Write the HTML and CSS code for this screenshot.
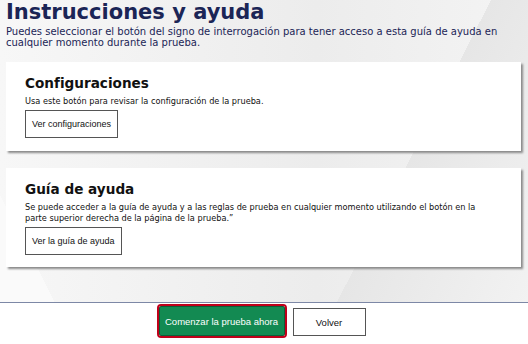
FILE: index.html
```html
<!DOCTYPE html>
<html lang="es">
<head>
	<meta charset="utf-8">
	<link rel="stylesheet" href="styles.css">
</head>
<body>
	<div class="page">
		<div class="content">
			<h1 class="title">Instrucciones y ayuda</h1>
			<p class="intro">Puedes seleccionar el botón del signo de interrogación para tener acceso a esta guía de ayuda en cualquier momento durante la prueba.</p>

			<section class="card card-config">
				<h2>Configuraciones</h2>
				<p>Usa este botón para revisar la configuración de la prueba.</p>
				<button class="btn-outline">Ver configuraciones</button>
			</section>

			<section class="card card-help">
				<h2>Guía de ayuda</h2>
				<p>Se puede acceder a la guía de ayuda y a las reglas de prueba en cualquier momento utilizando el botón en la parte superior derecha de la página de la prueba.”</p>
				<button class="btn-outline">Ver la guía de ayuda</button>
			</section>
		</div>
		<div class="actions">
			<button class="btn-start">Comenzar la prueba ahora</button>
			<button class="btn-back">Volver</button>
		</div>
	</div>
</body>
</html>
```

FILE: styles.css
```css
body {
	margin: 0;
	font-family: "DejaVu Sans", Verdana, sans-serif;
	color: #111;
}

.page {
	width: 528px;
	height: 344px;
	display: flex;
	flex-direction: column;
	overflow: hidden;
}

.content {
	height: 302px;
	padding: 0 7px 0 6px;
	box-sizing: border-box;
	background:
		linear-gradient(117deg, transparent 0, transparent 72%, #e6e6e6 72%, #f2f2f2 100%),
		linear-gradient(63deg, #fafafa 0, #fafafa 8%, transparent 8%),
		linear-gradient(90deg, #f7f7f7 0, #ececec 60%, #f4f4f4 100%);
}

.title {
	margin: 0;
	font-size: 21px;
	line-height: 24px;
	color: #1b2556;
}

.intro {
	margin: 2px 0 0;
	font-size: 10px;
	line-height: 11px;
	color: #1b2556;
}

.card {
	background: #fff;
	box-shadow: 2px 2px 2px #8a8a8a;
	padding: 12px 32px 12px 19px;
	box-sizing: border-box;
}

.card-config {
	margin-top: 14px;
	height: 89px;
}

.card-help {
	margin-top: 17px;
	height: 99px;
}

.card h2 {
	margin: 0;
	font-size: 13.6px;
	line-height: 18px;
	color: #111;
}

.card p {
	margin: 4px 0 3px;
	font-size: 8.2px;
	line-height: 11px;
}

.btn-outline {
	font-family: "Liberation Sans", Arial, sans-serif;
	font-size: 9px;
	background: #fff;
	border: 1px solid #555;
	color: #111;
	padding: 0 6px;
	height: 28px;
}

.actions {
	flex: 1;
	background: #fff;
	border-top: 1px solid #7d88a6;
	display: flex;
	justify-content: center;
	align-items: flex-start;
	gap: 8px;
	padding-top: 1px;
}

.btn-start {
	font-family: "Liberation Sans", Arial, sans-serif;
	font-size: 9.5px;
	white-space: nowrap;
	color: #fff;
	background: #138a52;
	border: 1px solid #0d5f39;
	outline: 2px solid #c0001a;
	border-radius: 2px;
	padding: 0;
	height: 30px;
	width: 126px;
	margin-top: 2px;
	margin-left: -4px;
}

.btn-back {
	font-family: "Liberation Sans", Arial, sans-serif;
	font-size: 9.5px;
	color: #111;
	background: #fff;
	border: 1px solid #555;
	height: 28px;
	width: 73px;
	margin-top: 4px;
}
```
